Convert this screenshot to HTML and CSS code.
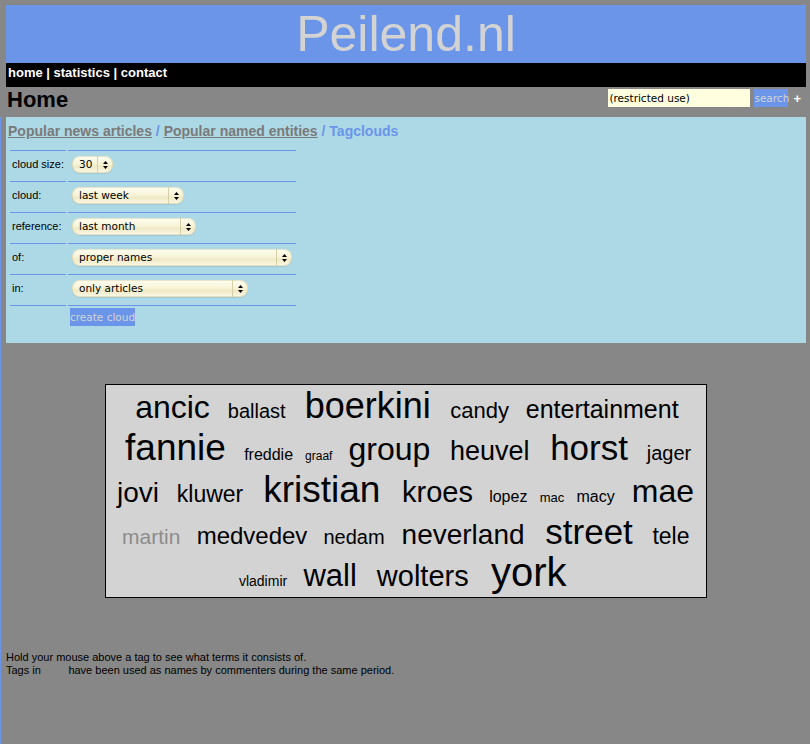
FILE: index.html
```html
<!DOCTYPE html>
<html lang="nl">
<head>
    <meta charset="UTF-8">
    <title>Peilend.nl - Home</title>
    <link rel="stylesheet" href="styles.css">
</head>
<body>
    <div class="top">
        <header class="site-header">
            <h1>Peilend.nl</h1>
        </header>

        <nav class="menu">
            <a href="#">home</a> | <a href="#">statistics</a> | <a href="#">contact</a>
        </nav>

        <div class="title-bar">
            <h2>Home</h2>
            <form class="search">
                <input type="text" value="(restricted use)">
                <button type="button">search</button>
                <span class="plus">+</span>
            </form>
        </div>
    </div>

    <div class="content">
        <!-- Formulier voor de tagcloud -->
        <section class="panel">
            <div class="crumbs">
                <a href="#">Popular news articles</a> / <a href="#">Popular named entities</a> / <span class="current">Tagclouds</span>
            </div>

            <div class="form-grid">
                <div class="cell label">cloud size:</div>
                <div class="cell"><span class="select w-size"><span class="select-text">30</span><span class="select-arrows"><svg width="5" height="8" viewBox="0 0 5 8"><path d="M2.5 0L5 3H0z M2.5 8L5 5H0z"/></svg></span></span></div>

                <div class="cell label">cloud:</div>
                <div class="cell"><span class="select w-cloud"><span class="select-text">last week</span><span class="select-arrows"><svg width="5" height="8" viewBox="0 0 5 8"><path d="M2.5 0L5 3H0z M2.5 8L5 5H0z"/></svg></span></span></div>

                <div class="cell label">reference:</div>
                <div class="cell"><span class="select w-ref"><span class="select-text">last month</span><span class="select-arrows"><svg width="5" height="8" viewBox="0 0 5 8"><path d="M2.5 0L5 3H0z M2.5 8L5 5H0z"/></svg></span></span></div>

                <div class="cell label">of:</div>
                <div class="cell"><span class="select w-of"><span class="select-text">proper names</span><span class="select-arrows"><svg width="5" height="8" viewBox="0 0 5 8"><path d="M2.5 0L5 3H0z M2.5 8L5 5H0z"/></svg></span></span></div>

                <div class="cell label">in:</div>
                <div class="cell"><span class="select w-in"><span class="select-text">only articles</span><span class="select-arrows"><svg width="5" height="8" viewBox="0 0 5 8"><path d="M2.5 0L5 3H0z M2.5 8L5 5H0z"/></svg></span></span></div>

                <div class="cell label last"></div>
                <div class="cell last"><button type="button" class="create-button">create cloud</button></div>
            </div>
        </section>

        <!-- De tagcloud zelf -->
        <div class="cloud">
            <div class="cloud-line">
                <span style="font-size: 32px">ancic</span>
                <span style="font-size: 20px">ballast</span>
                <span style="font-size: 36px">boerkini</span>
                <span style="font-size: 22px">candy</span>
                <span style="font-size: 25px">entertainment</span>
            </div>
            <div class="cloud-line">
                <span style="font-size: 37px">fannie</span>
                <span style="font-size: 16px">freddie</span>
                <span style="font-size: 12px">graaf</span>
                <span style="font-size: 32px">group</span>
                <span style="font-size: 27px">heuvel</span>
                <span style="font-size: 35px">horst</span>
                <span style="font-size: 20px">jager</span>
            </div>
            <div class="cloud-line">
                <span style="font-size: 28px">jovi</span>
                <span style="font-size: 23px">kluwer</span>
                <span style="font-size: 37px">kristian</span>
                <span style="font-size: 29px">kroes</span>
                <span style="font-size: 16px">lopez</span>
                <span style="font-size: 13px">mac</span>
                <span style="font-size: 16px">macy</span>
                <span style="font-size: 32px">mae</span>
            </div>
            <div class="cloud-line">
                <span class="commenter" style="font-size: 21px">martin</span>
                <span style="font-size: 24px">medvedev</span>
                <span style="font-size: 20px">nedam</span>
                <span style="font-size: 28px">neverland</span>
                <span style="font-size: 35px">street</span>
                <span style="font-size: 23px">tele</span>
            </div>
            <div class="cloud-line">
                <span style="font-size: 14px">vladimir</span>
                <span style="font-size: 31px">wall</span>
                <span style="font-size: 29px">wolters</span>
                <span style="font-size: 40px">york</span>
            </div>
        </div>

        <p class="notes">
            Hold your mouse above a tag to see what terms it consists of.<br>
            Tags in <span class="commenter-word">gray</span> have been used as names by commenters during the same period.
        </p>
    </div>
</body>
</html>
```

FILE: styles.css
```css
body {
    margin: 0;
    background-color: #878787;
    font-family: "Liberation Sans", Arial, sans-serif;
    font-size: 11px;
    color: #000;
}

.top {
    width: 800px;
    margin-left: 6px;
    padding-top: 5px;
}

.site-header {
    background-color: #6a95e8;
    height: 58px;
    text-align: center;
}

.site-header h1 {
    margin: 0;
    font-size: 50px;
    font-weight: normal;
    line-height: 58px;
    color: #d3d3d3;
}

.menu {
    background-color: #000;
    color: #fff;
    font-size: 13px;
    font-weight: bold;
    line-height: 20px;
    padding: 0 2px 4px;
}

.menu a {
    color: #fff;
    text-decoration: none;
}

.title-bar {
    height: 30px;
    display: flex;
    justify-content: space-between;
    align-items: flex-start;
}

.title-bar h2 {
    margin: 0 0 0 1px;
    font-size: 22px;
    line-height: 26px;
}

.search {
    display: flex;
    align-items: center;
    margin-top: 2px;
    margin-right: 5px;
}

.search input {
    width: 142px;
    height: 18px;
    box-sizing: border-box;
    border: none;
    padding: 0 1px;
    background-color: #ffffe0;
    font-family: "DejaVu Sans", sans-serif;
    font-size: 10.5px;
    color: #000;
}

.search button,
.create-button {
    border: none;
    margin: 0;
    padding: 0;
    height: 18px;
    background-color: #6a95e8;
    color: #d3d3d3;
    font-family: "DejaVu Sans", sans-serif;
    font-size: 10.5px;
}

.search button {
    margin-left: 4px;
    width: 34px;
}

.plus {
    color: #fff;
    font-weight: bold;
    font-size: 13px;
    margin-left: 5px;
}

.content {
    width: 800px;
    border-left: 1px solid #6a95e8;
    padding-left: 5px;
    min-height: calc(100vh - 117px);
}

.panel {
    width: 800px;
    height: 226px;
    box-sizing: border-box;
    background-color: #add8e6;
    padding: 6px 2px 0;
}

.crumbs {
    font-size: 14px;
    font-weight: bold;
    line-height: 16px;
    color: #6a95e8;
}

.crumbs a {
    color: #7a7a7a;
}

.form-grid {
    display: grid;
    grid-template-columns: 56px 228px;
    column-gap: 2px;
    margin: 11px 0 0 2px;
}

.cell {
    height: 25px;
    border-top: 1px solid #6a95e8;
    padding: 5px 0 0 2px;
    line-height: 17px;
}

.cell.last {
    padding-top: 2px;
    height: 20px;
}

.select {
    display: inline-flex;
    height: 17px;
    margin-left: 2px;
    border-radius: 8px;
    background: linear-gradient(#fffff2, #f6f2d4 50%, #efe9c4 60%, #fbf8e6);
    box-shadow: inset 0 0 0 1px rgba(190, 180, 130, 0.35), 0 1px 1px rgba(0, 0, 0, 0.08);
    font-family: "DejaVu Sans", sans-serif;
    font-size: 10.5px;
    line-height: 17px;
}

.select-text {
    flex: 1;
    padding-left: 7px;
}

.select-arrows {
    width: 15px;
    border-left: 1px solid #d5cfa8;
    display: flex;
    align-items: center;
    justify-content: center;
}

.w-size { width: 41px; }
.w-cloud { width: 112px; }
.w-ref { width: 124px; }
.w-of { width: 220px; }
.w-in { width: 176px; }

.cloud {
    width: 600px;
    height: 206px;
    margin: 41px auto 0;
    padding-top: 6px;
    border: 1px solid #000;
    background-color: #d3d3d3;
    font-size: 18px;
    line-height: 42px;
    text-align: center;
}

.cloud-line {
    white-space: nowrap;
    height: 42px;
}

.cloud-line span {
    line-height: 0;
    margin: 0 0.25em;
}

.cloud-line .commenter {
    color: #8c8c8c;
}

.notes {
    margin: 53px 0 0;
    font-size: 11px;
    line-height: 13px;
}

.commenter-word {
    color: #878787;
}
```
